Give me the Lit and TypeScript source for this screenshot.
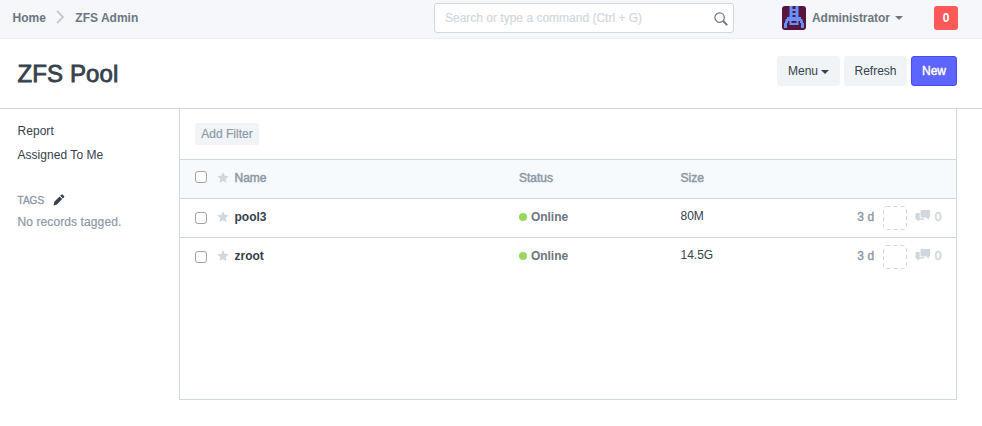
import { LitElement, html, svg, css } from "lit";
import { customElement } from "lit/decorators.js";

interface Pool { name: string; status: string; size: string; age: string; comments: number; }

const pools: Pool[] = [
  { name: "pool3", status: "Online", size: "80M", age: "3 d", comments: 0 },
  { name: "zroot", status: "Online", size: "14.5G", age: "3 d", comments: 0 },
];

const star = html`<svg class="star" width="12" height="12" viewBox="0 0 12 12"><path fill="#d1d8dd" d="M6 .1 7.7 3.8l4.100.4-3.100 2.800.9 4.100L6 9l-3.600 2.100.9-4.100L.2 4.200l4.100-.4z"/></svg>`;
const chat = html`<svg class="chat" width="16" height="14" viewBox="0 0 16 14"><path fill="#d1d8dd" d="M6.500 1h7.700q1 0 1 1v5.500q0 1-1 1h-.4v2.400l-2.400-2.400H6.500q-1 0-1-1V2q0-1 1-1z"/><path fill="#d1d8dd" d="M1.500 4h3.200v5.200h4.600v1.500H4.800L2.500 13v-2.300h-1q-1 0-1-1V5q0-1 1-1z"/></svg>`;

const pixels: number[][] = [
  [7.5, 0, 3, 12], [13.5, 0, 3, 12], [10, 3, 4, 2], [10, 7, 4, 2],
  [5, 11, 14, 2], [7.5, 13, 9, 1], [3.5, 13, 17, 2],
  [3, 15, 3, 2], [18, 15, 3, 2], [2, 17, 3, 5], [19, 17, 3, 5],
  [7.5, 15, 2, 4], [14.5, 15, 2, 4], [9, 17, 6, 2],
];

@customElement("app-root")
export class AppRoot extends LitElement {
  static styles = css`
    :host { display: block; height: 426px; overflow: hidden; background: #fff; color: #36414c;
      font: 12px/17px "Liberation Sans", Arial, sans-serif; }
    * { box-sizing: border-box; }
    svg { display: block; flex: none; }
    .navbar { height: 39px; background: #f5f7fa; border-bottom: 1px solid #e8eef3; display: flex;
      align-items: flex-start; padding: 0 24px 0 12px; color: #6c7680; font-weight: bold; }
    .crumbs { display: flex; width: 422px; padding: 10px 0 0 .5px; }
    .crumbs svg { margin: 0 10px 0 10.5px; }
    .search { width: 300px; height: 30px; margin-top: 3px; border: 1px solid #d1d8dd; border-radius: 3px;
      background: #fff; display: flex; justify-content: space-between; padding: 6px 5px 0 10px;
      color: #d1d8dd; font-weight: normal; -webkit-text-stroke: .2px #d1d8dd; }
    .search svg { margin-top: 2px; }
    .avatar { margin: 6px 6px 0 48px; border-radius: 3px; }
    .user { margin-top: 10px; letter-spacing: -.06px; }
    .caret { border: 4px solid transparent; border-top-color: currentColor; border-bottom: 0; width: 8px; height: 4px; }
    .navbar .caret { margin: 16px 0 0 5px; }
    .badge { margin: 6px 0 0 auto; width: 24px; height: 24px; border-radius: 3px; background: #ff5858; color: #fff;
      text-align: center; line-height: 24px; }
    .head { height: 70px; border-bottom: 1px solid #d1d8dd; padding: 17px 25px 0 17px; display: flex; }
    h1 { margin: 4px auto 0 .5px; font-size: 24px; line-height: 28px; font-weight: normal; letter-spacing: .12px; -webkit-text-stroke: .8px #36414c; }
    .btn { height: 30px; border-radius: 3px; background: #f0f4f7; display: flex; align-items: center;
      justify-content: center; margin-left: 4px; width: 63px; }
    .btn .caret { margin: 2px 0 0 3px; }
    .primary { width: 46px; background: #5e64ff; border: 1px solid #444bff; color: #fff; -webkit-text-stroke: .4px #fff; }
    .body { display: flex; }
    .side { width: 179px; padding: 14px 0 0 17.5px; }
    .side div { height: 24px; letter-spacing: .04px; }
    .side .tags { margin-top: 21px; height: 21px; display: flex; gap: 9px; font-size: 10px; color: #8d99a6; -webkit-text-stroke: .35px #8d99a6; }
    .side .none { color: #8d99a6; margin-top: 1px; letter-spacing: .1px; -webkit-text-stroke: .2px #8d99a6; }
    .tags svg { margin-top: 2px; }
    .panel { width: 778px; height: 291px; border: 1px solid #d1d8dd; border-top: 0; }
    .filters { height: 51px; border-bottom: 1px solid #d1d8dd; padding: 14px 15px; }
    .filter { width: 64px; height: 22px; border-radius: 3px; background: #f0f4f7; color: #8d99a6; line-height: 22px; text-align: center; -webkit-text-stroke: .2px #8d99a6; }
    .row { height: 39px; border-bottom: 1px solid #d1d8dd; display: grid; padding: 0 14.5px 0 15px;
      grid-template-columns: 324px 161.5px 1fr auto; }
    .row:last-child { border-bottom: 0; }
    .row > div { display: flex; padding-top: 10px; }
    .top { background: #f7fafc; color: #8d99a6; -webkit-text-stroke: .5px #8d99a6; }
    .box { width: 12px; height: 12px; border: 1px solid #a2a2a2; border-radius: 3px; background: #fff; margin: 3px 10px 0 0; }
    .top .box { margin-top: 1px; }
    .star { margin: 2px 5.5px 0 0; }
    .name { font-weight: bold; }
    .row > .status { font-weight: bold; color: #6c7680; letter-spacing: -.05px; }
    .dot { width: 8px; height: 8px; border-radius: 50%; background: #98d85b; margin: 4px 4px 0 0; }
    .row > .size { padding-top: 9px; }
    .age { color: #8d99a6; letter-spacing: .1px; -webkit-text-stroke: .4px #8d99a6; }
    .assign { margin: -3px 8px 0 9px; }
    .chat { margin: 0 3.500px 0 0; }
    .count { color: #d1d8dd; -webkit-text-stroke: .6px #d1d8dd; }
  `;

  render() {
    return html`
      <div class="navbar">
        <div class="crumbs"><span>Home</span>
          <svg width="9" height="14" viewBox="0 0 9 14"><path d="m1 .8 6 6.2-6 6.2" fill="none" stroke="#c0c9d1" stroke-width="1.8"/></svg>
          <span>ZFS Admin</span></div>
        <div class="search"><span>Search or type a command (Ctrl + G)</span>
          <svg width="14" height="14" viewBox="0 0 14 14" fill="none" stroke="#6c7680"><circle cx="5.6" cy="5.6" r="4.7" stroke-width="1.2"/><path d="m9 9 4.2 4.2" stroke-width="1.9"/></svg></div>
        <svg class="avatar" width="24" height="24" viewBox="0 0 24 24"><path fill="#58153f" d="M0 0h24v24H0z"/>
          ${pixels.map(([x, y, w, h]) => svg`<rect x=${x} y=${y} width=${w} height=${h} fill="#6690fa"/>`)}</svg>
        <span class="user">Administrator</span><i class="caret"></i>
        <div class="badge">0</div>
      </div>
      <div class="head"><h1>ZFS Pool</h1>
        <div class="btn">Menu<i class="caret"></i></div><div class="btn">Refresh</div><div class="btn primary">New</div></div>
      <div class="body">
        <div class="side"><div>Report</div><div>Assigned To Me</div>
          <div class="tags">TAGS<svg width="12" height="12" viewBox="0 0 12 12"><path fill="#36414c" d="m1.3 7.8 5.3-5.3 2.6 2.6-5.3 5.3-3.3 1zM7.3 1.8 8.4.7q.7-.7 1.4 0l1.2 1.2q.7.7 0 1.4L9.9 4.4z"/></svg></div>
          <div class="none">No records tagged.</div></div>
        <div class="panel">
          <div class="filters"><div class="filter">Add Filter</div></div>
          <div class="row top"><div><i class="box"></i>${star}Name</div><div>Status</div><div>Size</div></div>
          ${pools.map((p) => html`<div class="row">
            <div class="name"><i class="box"></i>${star}${p.name}</div>
            <div class="status"><i class="dot"></i>${p.status}</div>
            <div class="size">${p.size}</div>
            <div><span class="age">${p.age}</span>
              <svg class="assign" width="24" height="24"><rect x=".5" y=".5" width="23" height="23" rx="3" fill="none" stroke="#d1d8dd" stroke-dasharray="4 3"/></svg>
              ${chat}<span class="count">${p.comments}</span></div>
          </div>`)}
        </div>
      </div>`;
  }
}
